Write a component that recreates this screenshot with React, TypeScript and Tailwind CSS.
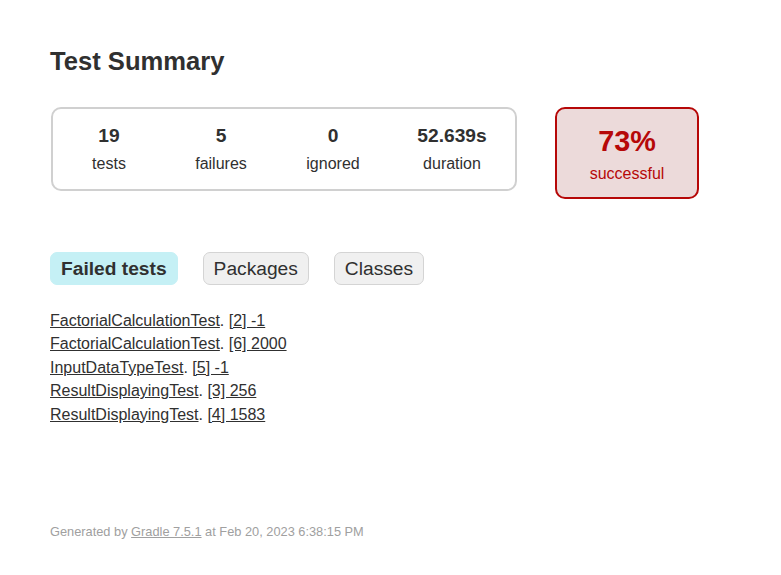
const counters = [
  { value: '19', label: 'tests', width: 'w-[112px]' },
  { value: '5', label: 'failures', width: 'w-[112px]' },
  { value: '0', label: 'ignored', width: 'w-[112px]' },
  { value: '52.639s', label: 'duration', width: 'w-[126px]' },
]

const failedTests = [
  { cls: 'FactorialCalculationTest', test: '[2] -1' },
  { cls: 'FactorialCalculationTest', test: '[6] 2000' },
  { cls: 'InputDataTypeTest', test: '[5] -1' },
  { cls: 'ResultDisplayingTest', test: '[3] 256' },
  { cls: 'ResultDisplayingTest', test: '[4] 1583' },
]

const tabs = [
  { label: 'Failed tests', selected: true },
  { label: 'Packages', selected: false },
  { label: 'Classes', selected: false },
]

export default function App() {
  return (
    <div className="min-h-screen bg-white px-[50px] pt-[30px] font-['Liberation_Sans',Arial,sans-serif] text-[16px] text-[#303030]">
      <h1 className="mt-[17px] text-[25.6px] font-bold leading-[29px]">Test Summary</h1>

      {/* summary */}
      <div className="mt-[31px] flex items-start">
        <div className="ml-[1px] flex rounded-[10px] border-2 border-[#d0d0d0]">
          {counters.map((c) => (
            <div key={c.label} className={`${c.width} pt-[16px] pb-[16px] text-center`}>
              <div className="mb-[8px] text-[19.2px] font-bold leading-[22px]">{c.value}</div>
              <div className="leading-[18px]">{c.label}</div>
            </div>
          ))}
        </div>
        <div className="ml-[38px] w-[144px] rounded-[10px] border-2 border-[#b60808] bg-[#ecdada] pt-[16px] pb-[14px] text-center text-[#b60808]">
          <div className="mb-[8px] text-[28.8px] font-bold leading-[32px]">73%</div>
          <div className="leading-[18px]">successful</div>
        </div>
      </div>

      {/* tabs */}
      <div className="mt-[53px] flex">
        {tabs.map((t) => (
          <div
            key={t.label}
            className={`mr-[25px] rounded-[7px] border px-[10px] py-[5px] text-[19.2px] leading-[21px] ${
              t.selected ? 'border-[#c5f0f5] bg-[#c5f0f5] font-bold' : 'border-[#d4d4d4] bg-[#f0f0f0]'
            }`}
          >
            {t.label}
          </div>
        ))}
      </div>

      <ul className="mt-[27px]">
        {failedTests.map((f, i) => (
          <li key={i} className="mb-[5px] leading-[18.4px]">
            <a href="#" className="underline">{f.cls}</a>. <a href="#" className="underline">{f.test}</a>
          </li>
        ))}
      </ul>

      <div className="mt-[100px] text-[12.8px] leading-[15px] text-[#a0a0a0]">
        Generated by <a href="#" className="underline">Gradle 7.5.1</a> at Feb 20, 2023 6:38:15 PM
      </div>
    </div>
  )
}
